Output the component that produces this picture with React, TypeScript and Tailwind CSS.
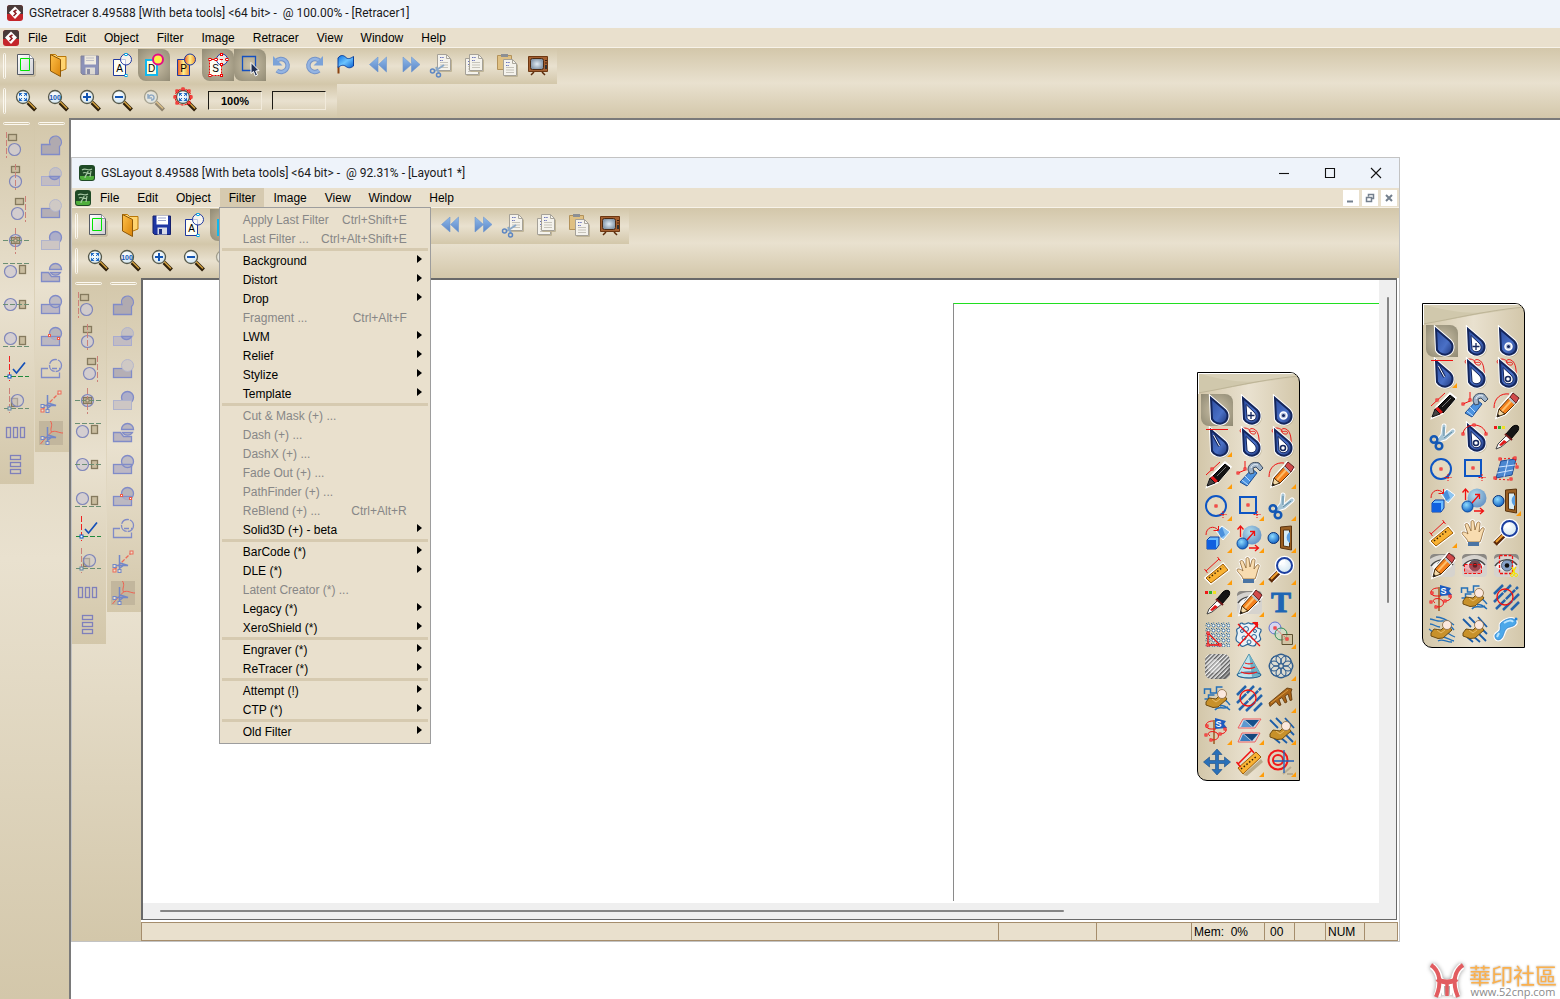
import { useState } from 'react';
import type { ReactNode } from 'react';
import clsx from 'clsx';

const NAVY = '#14265c';

function Icon({ children, className = 'size-8' }: { children: ReactNode; className?: string }) {
  return (
    <svg viewBox="0 0 32 32" className={clsx('block shrink-0', className)} fill="none" aria-hidden="true">
      {children}
    </svg>
  );
}

// Gradients shared by all icons on the page
function IconDefs() {
  return (
    <svg className="absolute size-0" aria-hidden="true">
      <defs>
        <linearGradient id="drop" x1="0" y1="0" x2="1" y2="1">
          <stop offset="0" stopColor="#2c4da0" />
          <stop offset="0.6" stopColor="#4a70c6" />
          <stop offset="1" stopColor="#1d3478" />
        </linearGradient>
        <linearGradient id="folder" x1="0" y1="0" x2="1" y2="1">
          <stop offset="0" stopColor="#ffc14a" />
          <stop offset="1" stopColor="#d98309" />
        </linearGradient>
        <linearGradient id="page" x1="0" y1="0" x2="1" y2="1">
          <stop offset="0" stopColor="#ffffff" />
          <stop offset="1" stopColor="#cfcfd4" />
        </linearGradient>
        <linearGradient id="fire" x1="0" y1="0" x2="1" y2="0">
          <stop offset="0" stopColor="#ee5a20" />
          <stop offset="0.5" stopColor="#fff08a" />
          <stop offset="1" stopColor="#f08a30" />
        </linearGradient>
        <linearGradient id="arrow" x1="0" y1="0" x2="0" y2="1">
          <stop offset="0" stopColor="#8fb9ea" />
          <stop offset="1" stopColor="#5b86c6" />
        </linearGradient>
        <linearGradient id="flag" x1="0" y1="0" x2="1" y2="1">
          <stop offset="0" stopColor="#0a6fe0" />
          <stop offset="0.5" stopColor="#6cc4ff" />
          <stop offset="1" stopColor="#0a5fd0" />
        </linearGradient>
        <radialGradient id="sphere" cx="0.4" cy="0.35" r="0.7">
          <stop offset="0" stopColor="#8fdcff" />
          <stop offset="1" stopColor="#0c5cc0" />
        </radialGradient>
        <radialGradient id="lens" cx="0.4" cy="0.35" r="0.7">
          <stop offset="0" stopColor="#ffffff" />
          <stop offset="1" stopColor="#cfe4f0" />
        </radialGradient>
        <radialGradient id="screen">
          <stop offset="0" stopColor="#e2ecf5" />
          <stop offset="1" stopColor="#8598ab" />
        </radialGradient>
        <pattern id="dots" width="5" height="5" patternUnits="userSpaceOnUse">
          <circle cx="2.5" cy="2.5" r="1.5" stroke="#2a6496" strokeWidth="0.9" fill="#fff" />
          <path d="M0 0h1v1H0z" fill="#2a6496" />
        </pattern>
        <pattern id="hatch" width="3" height="3" patternUnits="userSpaceOnUse" patternTransform="rotate(45)">
          <rect width="3" height="3" fill="#f2f2f2" />
          <rect width="1.5" height="3" fill="#5c5c5c" />
        </pattern>
      </defs>
    </svg>
  );
}

/* ---------- standard toolbar ---------- */

const Node = ({ x, y, c = '#f00000' }: { x: number; y: number; c?: string }) => (
  <rect x={x - 1} y={y - 1} width="2" height="2" fill="#fff" stroke={c} strokeWidth="1" />
);

const Letter = ({ children }: { children: string }) => (
  <text x="13.5" y="23" textAnchor="middle" fontSize="10" fill="#000" fontFamily="Liberation Sans, sans-serif">
    {children}
  </text>
);

const PageSheet = ({ x, y }: { x: number; y: number }) => (
  <g transform={`translate(${x} ${y})`}>
    <path d="M1.5 17.5h13v-12" stroke="#bfb496" />
    <path d="M0.5 .5h9l4 4v12h-13z" fill="#f4f2ec" stroke="#a5a198" />
    <path d="M9.5 .5v4h4" stroke="#aaa69c" />
    <path d="M3 3.5h4M3 6.5h3" stroke="#6b74bb" strokeDasharray="1.5 .7" />
    <path d="M3 8.5h8M3 11h8M3 13.5h8" stroke="#c6c3ba" />
  </g>
);

const toolbarIcons: Record<string, ReactNode> = {
  new: (
    <>
      <path d="M9 27h16V12" stroke="#b8ab8d" />
      <path d="M7.5 5.5h12l4 4v16h-16z" fill="url(#page)" stroke="#555b66" />
      <path d="M19.5 5.5v4h4" fill="#fff" stroke="#8b8f98" />
      <path d="M10.5 9.5h9v12h-9z" stroke="#00e400" />
    </>
  ),
  open: (
    <>
      <path d="M8.5 5.5h5l2 2h8.5v12.5l-5 2z" fill="#ffd470" stroke="#b97708" />
      <path d="M8.5 5.5l10 5v17l-10-5.5z" fill="url(#folder)" stroke="#8c5708" />
    </>
  ),
  save: (
    <>
      <path d="M7 7h17.5v18.5h-16l-1.5-1.5z" fill="#1e36a4" stroke="#15206c" />
      <path d="M10.5 6.5h11.5v9h-11.5z" fill="#fff" />
      <path d="M12 9h8M12 11.5h8" stroke="#9aa3cc" />
      <path d="M11.5 18.5h9.5v7h-9.5z" fill="#d8dbe8" />
      <path d="M13 20h3v5h-3z" fill="#1e2f80" />
    </>
  ),
  fontA: (
    <>
      <path d="M7.5 10.5h12v16h-12z" fill="#fffef2" stroke="#2039a0" />
      <circle cx="20" cy="10.5" r="5.5" stroke="#2039a0" fill="#fff" fillOpacity=".7" />
      <Letter>A</Letter>
      <Node x={20} y={5.5} c="#00a8e8" />
      <Node x={20} y={26.5} c="#00a8e8" />
    </>
  ),
  fontD: (
    <>
      <path d="M8 11h11v15H8z" fill="#fffde0" stroke="#10b8ee" strokeWidth="2" />
      <circle cx="20" cy="10.5" r="5" stroke="#e40d86" strokeWidth="2" fill="#fff04a" />
      <Letter>D</Letter>
    </>
  ),
  fontP: (
    <>
      <path d="M7.5 10.5h12v16h-12z" fill="url(#fire)" stroke="#2039a0" />
      <circle cx="20" cy="10.5" r="5.5" stroke="#2039a0" fill="url(#fire)" />
      <Letter>P</Letter>
    </>
  ),
  fontS: (
    <>
      <path d="M7.5 10.5h12v16h-12z" fill="#fffef2" stroke="#f00000" strokeDasharray="2 1" />
      <circle cx="20" cy="10.5" r="5.5" stroke="#2039a0" fill="#fff" fillOpacity=".7" />
      <path d="M8 10.5h17" stroke="#f00000" strokeDasharray="3 2" />
      <Letter>S</Letter>
      <Node x={8} y={10.5} />
      <Node x={8} y={26.5} />
      <Node x={19.5} y={26.5} />
      <Node x={19.5} y={5.5} />
      <Node x={25} y={10.5} />
      <Node x={14} y={10.5} />
      <Node x={19.5} y={15.5} />
    </>
  ),
  select: (
    <>
      <path d="M8.5 7.5h13v14h-13z" stroke="#1450c0" strokeWidth="1.3" />
      <path d="M17 13.5v11l2.5-2 1.8 4.500 2.2-1-1.8-4 3.3-.5z" fill="#223052" stroke="#fff" />
    </>
  ),
  undo: (
    <>
      <path d="M10 12.5a6.500 6.500 0 1 1 1 9" stroke="#7594c8" strokeWidth="4.500" />
      <path d="M10 12.5a6.500 6.500 0 1 1 1 9" stroke="#94b4e2" strokeWidth="2.500" />
      <path d="M7 7v9.5h9.5z" fill="#7ba2d8" />
    </>
  ),
  redo: (
    <>
      <path d="M22 12.5a6.500 6.500 0 1 0-1 9" stroke="#7594c8" strokeWidth="4.500" />
      <path d="M22 12.5a6.500 6.500 0 1 0-1 9" stroke="#94b4e2" strokeWidth="2.500" />
      <path d="M25 7v9.5h-9.5z" fill="#7ba2d8" />
    </>
  ),
  flag: (
    <>
      <path d="M8.5 17.5v7" stroke="#8a4210" strokeWidth="2" />
      <path d="M8 9c3-4 6-2.500 8-.5s4.500 1 7.500-1v9.500c-3 2.500-5.500 2-7.500.5s-4.500-2-8 1z" fill="url(#flag)" stroke="#0b3f9c" />
    </>
  ),
  rewind: <path d="M16 8v15l-8.500-7.500zM24.500 8v15l-8-7.500z" fill="url(#arrow)" stroke="#6f97cf" strokeWidth=".6" />,
  forward: <path d="M9 8v15l8.500-7.500zM17.500 8v15l8.500-7.500z" fill="url(#arrow)" stroke="#6f97cf" strokeWidth=".6" />,
  cut: (
    <>
      <PageSheet x={11} y={5} />
      <path d="M18 16l-9 6M10 18l3 6" stroke="#8aa8c8" strokeWidth="2" />
      <circle cx="6.5" cy="22" r="2" stroke="#5d86c2" strokeWidth="1.500" />
      <circle cx="12.5" cy="26" r="2" stroke="#5d86c2" strokeWidth="1.500" />
    </>
  ),
  copy: (
    <>
      <PageSheet x={7} y={9} />
      <PageSheet x={11} y={5} />
    </>
  ),
  paste: (
    <>
      <path d="M7.5 6.5h14v14h-14z" fill="#dfc083" stroke="#b3925a" />
      <path d="M11 5h7v3h-7z" fill="#8c8f94" />
      <PageSheet x={13} y={10} />
    </>
  ),
  tv: (
    <>
      <path d="M12 23l-3 3M20 23l3 3" stroke="#5a2c0c" strokeWidth="1.500" />
      <path d="M6.5 7.5h19v15h-19z" fill="#a35f31" stroke="#6e3812" />
      <rect x="8.500" y="9.500" width="13" height="11" rx="2" fill="url(#screen)" stroke="#4c2a12" />
      <path d="M23 11.5h2M23 14h2" stroke="#3b2010" />
      <path d="M23 16h2v4h-2z" fill="#333" />
    </>
  ),
};

const toolbarButtons = [
  { name: 'new', label: 'New' },
  { name: 'open', label: 'Open' },
  { name: 'save', label: 'Save' },
  { name: 'fontA', label: 'Outline view' },
  { name: 'fontD', label: 'Draft view', on: true },
  { name: 'fontP', label: 'Preview' },
  { name: 'fontS', label: 'Structure view', on: true },
  { name: 'select', label: 'Select', on: true },
  { name: 'undo', label: 'Undo' },
  { name: 'redo', label: 'Redo' },
  { name: 'flag', label: 'Flag' },
  { name: 'rewind', label: 'Previous' },
  { name: 'forward', label: 'Next' },
  { name: 'cut', label: 'Cut' },
  { name: 'copy', label: 'Copy' },
  { name: 'paste', label: 'Paste' },
  { name: 'tv', label: 'Monitor' },
];

const zoomKinds = ['fit', '100', 'in', 'out', 'back', 'area'];

function ZoomIcon({ kind }: { kind: string }) {
  return (
    <Icon>
      <g opacity={kind === 'back' ? 0.45 : 1}>
        <path d="M18 18.5l7.500 7.500" stroke="#2e1f0a" strokeWidth="4" />
        <path d="M18 17.500l7 7" stroke="#d0a040" strokeWidth="1.500" />
        <circle cx="13" cy="13" r="6.500" fill="url(#lens)" stroke="#55584a" strokeWidth="1.300" />
        {(kind === 'fit' || kind === 'area') && (
          <>
            <path d="M9 9l3.500 0-3.500 3.500zM17 9l-3.500 0 3.500 3.500zM9 17l3.500 0-3.500-3.500zM17 17l-3.500 0 3.500-3.500z" fill="#1e68c4" />
            <path d="M10 10l2 2M16 10l-2 2M10 16l2-2M16 16l-2-2" stroke="#1e68c4" />
          </>
        )}
        {kind === '100' && (
          <text x="13" y="15.500" textAnchor="middle" fontSize="7" fontWeight="bold" fill="#1255b4" fontFamily="Liberation Sans, sans-serif">
            100
          </text>
        )}
        {kind === 'in' && <path d="M9 13h8M13 9v8" stroke="#1255b4" strokeWidth="2" />}
        {kind === 'out' && <path d="M9 13h8" stroke="#1255b4" strokeWidth="2" />}
        {kind === 'back' && <path d="M10 10v4h4M10.5 13.500c1-3.500 6-3 5.500.5-.3 1.500-1.500 2-3 2" stroke="#2a6ec0" strokeWidth="1.500" />}
      </g>
      {kind === 'area' && (
        <>
          <circle cx="13" cy="13" r="8" stroke="#f00000" strokeDasharray="3 1" />
          <Node x={13} y={5} />
          <Node x={7} y={7} />
          <Node x={19} y={7} />
          <Node x={5} y={13} />
          <Node x={21} y={13} />
          <Node x={7} y={19} />
          <Node x={19} y={19} />
        </>
      )}
    </Icon>
  );
}

/* ---------- side columns ---------- */

const box = { stroke: '#857a5e', strokeWidth: 1.3, fill: '#c9bd9f' };
const disc = { stroke: '#7f86ba', strokeWidth: 1.2, fill: '#cfcbd2', fillOpacity: 0.8 };
const redDash = { stroke: '#cc8078', strokeDasharray: '6 2' };
const greenDash = { stroke: '#6b8f73', strokeDasharray: '5 2' };
const bar = { stroke: '#7f80bb', strokeWidth: 1.3, fill: '#d5ccb8' };

const alignIcons: ReactNode[] = [
  <>
    <path d="M6.5 3v26" {...redDash} />
    <rect x="8.5" y="5.5" width="8" height="6" {...box} />
    <circle cx="14.5" cy="20.5" r="6" {...disc} />
  </>,
  <>
    <rect x="11.5" y="5.5" width="8" height="6" {...box} />
    <circle cx="15.5" cy="20.5" r="6" {...disc} />
    <path d="M15.5 3v26" {...redDash} />
  </>,
  <>
    <path d="M25.5 3v26" {...redDash} />
    <rect x="15.5" y="5.5" width="8" height="6" {...box} />
    <circle cx="17.5" cy="20.5" r="6" {...disc} />
  </>,
  <>
    <circle cx="15.5" cy="15.5" r="6" {...disc} />
    <rect x="11.5" y="12.5" width="8" height="6" {...box} />
    <path d="M15.5 3v26" {...redDash} />
    <path d="M3 15.5h26" {...greenDash} />
    <rect x="14" y="14" width="3" height="3" fill="#d9cdb4" stroke="#857a5e" />
  </>,
  <>
    <path d="M3 6.5h26" {...greenDash} />
    <circle cx="10.5" cy="14.5" r="6" {...disc} />
    <rect x="19.5" y="8.5" width="6" height="8" {...box} />
  </>,
  <>
    <circle cx="10.5" cy="15.5" r="6" {...disc} />
    <rect x="19.5" y="11.5" width="6" height="8" {...box} />
    <path d="M3 15.5h26" {...greenDash} />
  </>,
  <>
    <circle cx="10.5" cy="17.5" r="6" {...disc} />
    <rect x="19.5" y="15.5" width="6" height="8" {...box} />
    <path d="M3 25.5h26" {...greenDash} />
  </>,
  <>
    <path d="M9.5 3v25" stroke="#f02020" strokeDasharray="6 2" />
    <path d="M4 23.5h25" stroke="#1f8a3c" strokeDasharray="5 2" />
    <rect x="8" y="22" width="3" height="3" fill="#fff" stroke="#0a58c8" />
    <path d="M13 16l3.5 4L25 9.5" stroke="#1450b8" strokeWidth="1.700" />
  </>,
  <>
    <path d="M9.5 3v25" {...redDash} />
    <path d="M4 23.5h25" {...greenDash} />
    <rect x="11.5" y="13.5" width="6" height="8" {...box} />
    <circle cx="17.5" cy="15.5" r="6" {...disc} fillOpacity={0.5} />
    <rect x="8" y="22" width="3" height="3" fill="#e9e0cd" stroke="#5f86a8" />
  </>,
  <>
    <rect x="6.5" y="10.5" width="4" height="10" {...bar} />
    <rect x="13.5" y="10.5" width="4" height="10" {...bar} />
    <rect x="20.5" y="10.5" width="4" height="10" {...bar} />
  </>,
  <>
    <rect x="10.5" y="6.5" width="10" height="4" {...bar} />
    <rect x="10.5" y="13.5" width="10" height="4" {...bar} />
    <rect x="10.5" y="20.5" width="10" height="4" {...bar} />
  </>,
];

const line = { stroke: '#808bc8', strokeWidth: 1.3 };

const SnipBlades = () => (
  <>
    <path d="M12.5 10v16M8 20.5h13l-8-2.500M13 23l4-3" stroke="#7287c8" strokeWidth="1.500" />
    <rect x="6" y="19.5" width="3" height="3" fill="#e9e0cd" stroke="#7287c8" />
    <rect x="11" y="24.5" width="3" height="3" fill="#e9e0cd" stroke="#7287c8" />
  </>
);

const shapeIcons: ReactNode[] = [
  <path d="M6.5 15.5h8.500a6 6 0 1 1 9.500 2v8h-18z" fill="#b0aab0" {...line} />,
  <>
    <circle cx="20.5" cy="12.5" r="6" fill="#c6c1c2" stroke="#b0b3cc" />
    <rect x="6.5" y="15.5" width="18" height="9" fill="#c2bcc2" stroke="#a9acd0" />
    <path d="M14.5 15.5h10c-2 4-8 4-10 0z" fill="#a5a7c8" {...line} />
  </>,
  <>
    <rect x="6.5" y="15.5" width="18" height="9" fill="#b5afb5" {...line} />
    <circle cx="20.5" cy="12.5" r="6" fill="#cfc9c5" stroke="#b5b7cc" />
  </>,
  <>
    <circle cx="20.5" cy="12.5" r="6" fill="#adaec8" {...line} />
    <rect x="6.5" y="15.5" width="18" height="9" fill="#cdc6c4" stroke="#b0b3cc" />
  </>,
  <>
    <path d="M14.5 12.5a6 6 0 0 1 12 0z" fill="#bab6bf" {...line} />
    <path d="M6.5 15.5h7l3 4h8v5h-18z" fill="#bcb6bf" {...line} />
    <path d="M15.5 15.5h10c-2 3.500-8 3.500-10 0z" fill="#bab6bf" {...line} />
  </>,
  <>
    <rect x="6.5" y="15.5" width="18" height="9" fill="#bdb8c4" {...line} />
    <circle cx="20.5" cy="12.5" r="6" fill="#bfbcc4" {...line} />
    <path d="M15.5 15.5h9v3" {...line} />
  </>,
  <>
    <circle cx="20.5" cy="12.5" r="6" fill="#b7b4bb" {...line} />
    <rect x="6.5" y="15.5" width="18" height="9" fill="#b3b0c0" fillOpacity=".8" {...line} />
    <rect x="13.5" y="13.5" width="2" height="2" fill="#fff" stroke="#f05a48" />
    <rect x="22.5" y="16.5" width="2" height="2" fill="#fff" stroke="#f05a48" />
  </>,
  <>
    <path d="M13 15.5h-6.500v9h18v-5" {...line} />
    <circle cx="20.5" cy="12.5" r="6" {...line} strokeDasharray="9 1" />
    <path d="M17 15.5h8" {...line} strokeDasharray="5 2" />
  </>,
  <>
    <path d="M7 25L25 7" stroke="#ec6a58" strokeWidth="1.300" strokeDasharray="4 1.500" />
    <rect x="23" y="6" width="3" height="3" fill="#e9dfcc" stroke="#ec6a58" />
    <rect x="6" y="24" width="3" height="3" fill="#e9dfcc" stroke="#ec6a58" />
    <SnipBlades />
  </>,
  <>
    <rect x="4" y="4" width="24" height="24" fill="#c2b69d" />
    <path d="M15.5 4c3 5-1 7 1 11-3 3-7 7-11 12M16.5 15c4-2 7 1 11.500 1" stroke="#f06050" />
    <SnipBlades />
  </>,
];

/* ---------- tool palette ---------- */

const DROP = 'M10 4L24 16C28 20 27 26 23 28.500S13 29 11 25Q10.5 14 10 4z';
const DROP_IN = 'M13 10.5l8 7.500c3 3 2.500 6.500 0 8s-6 .5-7-2z';

const Drop = ({ hollow = false, children }: { hollow?: boolean; children?: ReactNode }) => (
  <>
    <path d={DROP} stroke="#a89c7c" strokeWidth="3" strokeOpacity=".5" transform="translate(1 1)" />
    <path d={DROP} stroke="#fff" strokeWidth="4" />
    <path d={DROP} fill="url(#drop)" stroke={NAVY} strokeWidth="2" />
    {hollow && <path d={DROP_IN} fill="#fff" stroke={NAVY} />}
    {children}
  </>
);

const RedCurls = () => (
  <path d="M14 8c-6 1-9-4-5-5.500s8 1 8 2.500 5-1 5.500 1.500-5 2-6-1 3-4 6-1.500 4 9 3.500 14" stroke="#e81818" />
);

const Finger = () => (
  <>
    <path d="M5 20l3-4 7 1 6-6 5 6-9 8-5 .5-7-2.500z" fill="#c8912a" stroke="#6e4c12" />
    <path d="M11 17l4 3 4-3" stroke="#e8bc68" />
    <circle cx="21" cy="12" r="4.500" fill="#fbe8de" stroke="#8a6840" strokeWidth=".8" />
  </>
);

const Bevel = () => (
  <path d="M4 13L13 4M4 21L21 4M6 28L28 6M13 29L29 13M21 29L29 21" stroke="#2464ac" strokeWidth="2.500" strokeDasharray="13 1" />
);

const Ruler = () => (
  <>
    <path d="M5 24L22 10l5 6L10 29z" fill="#fff" stroke="#fff" strokeWidth="3" />
    <path d="M5 24L22 10l5 6L10 29z" fill="#f9b233" stroke="#9a5c08" />
    <path d="M8 24L22 13" stroke="#3a2406" strokeWidth="1.500" strokeDasharray="1.500 2" />
    <path d="M5 17L18 5M3.5 15l3 4M16.5 3l3 4" stroke="#e81818" />
  </>
);

const Pencil = () => (
  <>
    <path d="M7 28l2-8L22 5l6 6-13 14z" stroke="#fff" strokeWidth="3" />
    <path d="M7 28l2-8 6 5z" fill="#f3d9a8" stroke="#3a2406" />
    <path d="M7 28l1-3 2 2z" fill="#222" />
    <path d="M9 20L20 8l6 6-11 11z" fill="#f4801c" stroke="#5c3208" />
    <path d="M12 22L22 11" stroke="#ffbe68" strokeWidth="2" />
    <path d="M20 8l3-4 6 5-3 5z" fill="#d24a4a" stroke="#5c2020" />
    <path d="M19 9l6 6" stroke="#b8c4d0" strokeWidth="2" />
  </>
);

const Eye = ({ tint = '#86a2c8' }: { tint?: string }) => (
  <>
    <rect x="4" y="5" width="25" height="23" rx="4" fill="#d6d3ce" />
    <path d="M4 10c0-4 2-5 5-5h16c3 0 4 2 4 6-7-6-16-7-25-1z" fill="#8b8883" />
    <path d="M5 17c5-7 15-9 22-1-6 7-16 8-22 1z" fill="#f2f2f2" />
    <path d="M5 17c5-7 15-9 22-1" stroke="#444" strokeWidth="1.500" />
    <circle cx="17" cy="16.500" r="5.500" fill={tint} stroke="#55606e" />
    <circle cx="17" cy="16.500" r="2.300" fill="#111" />
  </>
);

const RulerPoint = ({ x, y }: { x: number; y: number }) => <rect x={x} y={y} width="2" height="2" stroke="#f01010" fill="#fff" />;

const toolIcons: Record<string, ReactNode> = {
  drop: <Drop />,
  dropPlus: (
    <Drop hollow>
      <path d="M18 18v7M14.5 21.500h7" stroke={NAVY} strokeWidth="1.300" />
    </Drop>
  ),
  dropRing: (
    <Drop>
      <circle cx="18.5" cy="21.500" r="3.500" fill="#b9c4e0" stroke="#fff" strokeWidth="1.500" />
      <circle cx="18.5" cy="21.500" r="1.500" fill={NAVY} />
    </Drop>
  ),
  tangent: (
    <>
      <Drop>
        <path d="M12.5 9l6 11" stroke={NAVY} strokeWidth="3" />
        <path d="M12.5 9l6 11" stroke="#fff" />
      </Drop>
      <path d="M5 3.5h22" stroke="#f01010" />
    </>
  ),
  curves: (
    <>
      <RedCurls />
      <Drop hollow />
    </>
  ),
  curvesRing: (
    <>
      <RedCurls />
      <Drop hollow>
        <circle cx="18" cy="22" r="2.500" fill="#fff" stroke={NAVY} strokeWidth="1.500" />
      </Drop>
    </>
  ),
  dropArc: (
    <>
      <Drop hollow>
        <circle cx="18" cy="22" r="2.500" fill="#fff" stroke={NAVY} strokeWidth="1.500" />
      </Drop>
      <path d="M5 13C6 1 26 1 28 13" stroke="#f01010" />
      <RulerPoint x={4} y={12} />
      <RulerPoint x={15} y={3} />
      <RulerPoint x={27} y={12} />
    </>
  ),
  marker: (
    <>
      <path d="M5 17L19 4" stroke="#f01010" />
      <RulerPoint x={10} y={10} />
      <path d="M7 28l4-10L24 5l5 4-13 15z" fill="#fff" stroke="#fff" strokeWidth="3" />
      <path d="M12 18L24 6l5 4-12 14z" fill="#141414" stroke="#000" />
      <path d="M16 18l9-9" stroke="#777" />
      <path d="M9 20l3-2 5 5-3 2z" fill="#e01818" stroke="#5c0808" strokeWidth=".6" />
      <path d="M6 28l3-8 5 5z" fill="#444" stroke="#111" />
    </>
  ),
  wrench: (
    <>
      <path d="M5 15l7-3V3" stroke="#f01010" />
      <RulerPoint x={4} y={14} />
      <RulerPoint x={11} y={10} />
      <path d="M7 24L19 11l5 4-10 13z" fill="#4c93e0" stroke="#1d4c90" />
      <path d="M9 22l6 5M12 18l5 5" stroke="#b8dcff" />
      <path d="M15 12c0-6 5-9 11-7l4 5-3 3-4-4-3 1 1 5-4 1z" fill="#9fb3c8" stroke="#3c4c60" />
      <path d="M18 10c1-3 3-4 7-3" stroke="#eef4fa" />
    </>
  ),
  pencil: (
    <>
      <path d="M4 19c0-10 7-15 15-14" stroke="#f01010" />
      <Pencil />
    </>
  ),
  circle: (
    <>
      <circle cx="15" cy="16" r="10" stroke="#0d55c4" strokeWidth="2" fill="#e4dac0" />
      <RulerPoint x={14} y={15} />
      <path d="M22 21v7M18.5 24.500h7" stroke="#f01010" strokeDasharray="2 1" />
    </>
  ),
  square: (
    <>
      <rect x="7" y="7" width="16" height="16" stroke="#0d55c4" strokeWidth="2" fill="#e4dac0" />
      <RulerPoint x={14} y={14} />
      <path d="M24 21v7M20.5 24.500h7" stroke="#f01010" strokeDasharray="2 1" />
    </>
  ),
  scissors: (
    <>
      <path d="M18 5l-1 9-5 6M27 10l-8 7-7 2" stroke="#fff" strokeWidth="5" strokeLinecap="round" />
      <path d="M18 5l-1 9-5 6M27 10l-8 7-7 2" stroke="#a6c4d4" strokeWidth="3" strokeLinecap="round" />
      <path d="M18 6l0 9M26 11l-8 6" stroke="#5c8aa4" />
      <circle cx="8" cy="18.500" r="3.300" stroke="#1458b4" strokeWidth="2.500" />
      <circle cx="13" cy="25" r="3.300" stroke="#1458b4" strokeWidth="2.500" />
    </>
  ),
  cubes: (
    <>
      <path d="M15 9l6-5 8 6-7 8z" fill="#8cc4f0" stroke="#fff" />
      <path d="M17 9l4-4 3 8-4 3z" fill="#4a90dc" />
      <path d="M5 13c0-8 8-10 12-5M17.500 4v4.500h-5" stroke="#e81818" />
      <path d="M6 18l3-3h9v8l-3 4H6z" fill="#6cbcff" stroke="#0b3ca0" />
      <path d="M6 18h9v9H6z" fill="#1060e0" />
    </>
  ),
  spheres: (
    <>
      <circle cx="19" cy="13" r="9.500" fill="url(#sphere)" opacity=".6" />
      <circle cx="9.500" cy="21.500" r="5.500" fill="url(#sphere)" stroke="#0b4aa0" />
      <path d="M7.5 15V4M4.5 7.500l3-3.500 3 3.500M14 18l7-8M17 9.500h4.500v4.500M16 26h9M22 23l3.500 3-3.500 3" stroke="#f01010" strokeWidth="1.300" />
    </>
  ),
  mirror: (
    <>
      <path d="M15.5 5l11-1v24l-11-2z" fill="#9a6024" stroke="#5a3410" />
      <path d="M18.5 8h6v17l-6-1z" fill="#d8ecf4" stroke="#5a3410" />
      <path d="M25 10a5.500 6 0 0 0 0 11z" fill="#5a9ee0" />
      <circle cx="8.500" cy="16" r="5.500" fill="url(#sphere)" stroke="#0a3478" />
    </>
  ),
  ruler: <Ruler />,
  hand: (
    <>
      <path
        d="M10 25c-1-4-6-7-6-9s4-1 6 1L7 8c0-2 3-2 3.500 0l2.500 6V5c0-2 3-2 3 0l1 8 2-7c1-2 3.500-1 3 1l-1 8 3-4c1-1 3 0 2 2-2 4-2 8-4 12z"
        fill="#f6d8ac"
        stroke="#fff"
        strokeWidth="2.500"
      />
      <path
        d="M10 25c-1-4-6-7-6-9s4-1 6 1L7 8c0-2 3-2 3.500 0l2.500 6V5c0-2 3-2 3 0l1 8 2-7c1-2 3.500-1 3 1l-1 8 3-4c1-1 3 0 2 2-2 4-2 8-4 12z"
        fill="#f8dcb0"
        stroke="#8c6434"
        strokeWidth=".8"
      />
      <path d="M10 25h11v4H10z" fill="#4a74a4" />
    </>
  ),
  magnifier: (
    <>
      <path d="M6 26l9-9" stroke="#fff" strokeWidth="7" />
      <path d="M5 27l10-10" stroke="#5c2a08" strokeWidth="5" />
      <path d="M6 25l8-8" stroke="#f0a030" strokeWidth="2" />
      <circle cx="19.5" cy="11.500" r="8" stroke="#fff" strokeWidth="3.500" />
      <circle cx="19.5" cy="11.500" r="7.500" fill="url(#lens)" stroke="#1c3fa0" strokeWidth="2" />
      <path d="M15 11c0-3 3-4 5-4" stroke="#fff" strokeWidth="2" />
    </>
  ),
  dropper: (
    <>
      <path d="M4 6.500h3" stroke="#f01818" strokeWidth="3" />
      <path d="M8 6.500h3" stroke="#30b030" strokeWidth="3" />
      <path d="M12 6.500h3" stroke="#f0e020" strokeWidth="3" />
      <path d="M6 28l2-5L18 13l4 4-11 9z" fill="#fff" stroke="#444" />
      <path d="M9 24l5-5 3 2-6 4z" fill="#e01818" />
      <path d="M16 13l6-7c2-2 5-2 6-1s1 4-1 6l-6 7z" fill="#151515" stroke="#000" />
      <path d="M15 13l7 6" stroke="#701818" strokeWidth="2" />
    </>
  ),
  eyePencil: (
    <>
      <Eye />
      <Pencil />
    </>
  ),
  eyeRed: (
    <>
      <Eye tint="#7a4a50" />
      <rect x="6.500" y="15.500" width="17" height="9" fill="#f04050" fillOpacity=".35" stroke="#f01010" strokeDasharray="3 1.500" />
    </>
  ),
  eyeCut: (
    <>
      <Eye />
      <rect x="9.500" y="6.500" width="13" height="18" stroke="#f01010" strokeWidth="1.300" strokeDasharray="3 1.500" />
      <path d="M22 18l3 7M26 18l-4 7" stroke="#f4e400" strokeWidth="1.500" />
      <circle cx="22" cy="26" r="1.500" stroke="#f4e400" />
      <circle cx="26" cy="26" r="1.500" stroke="#f4e400" />
    </>
  ),
  text: (
    <text x="16" y="26" textAnchor="middle" fontSize="30" fontWeight="bold" fill="#1e66b4" stroke="#1e66b4" strokeWidth="1" fontFamily="Liberation Serif, serif">
      T
    </text>
  ),
  patternTri: (
    <>
      <rect x="4" y="4" width="25" height="25" fill="url(#dots)" />
      <path d="M7 15v12h12z" stroke="#f01010" strokeWidth="1.300" />
      <RulerPoint x={6} y={14} />
      <RulerPoint x={6} y={26} />
      <RulerPoint x={18} y={26} />
    </>
  ),
  patternCross: (
    <>
      <path
        d="M9 5c3 3 5-1 7 0s3 2 5 0 3 2 3 4 5 1 4 4-3 3-1 6-1 4-3 5 0 4-4 4-4-3-7-1-5 2-6-1-4-1-4-5 2-4 1-7 0-3 2-4-1-5 3-5z"
        fill="#eaf2f6"
        stroke="#2a6496"
        strokeWidth="1.200"
      />
      <g stroke="#2a6496">
        <circle cx="13" cy="11" r="2.500" />
        <circle cx="21" cy="19" r="2.500" />
        <circle cx="11" cy="20" r="2" />
        <circle cx="16" cy="24" r="2" />
        <circle cx="9" cy="13" r="1.500" />
        <circle cx="22" cy="13" r="1.500" />
      </g>
      <path d="M5 6l22 22M5 28L25 6" stroke="#f01010" strokeWidth="1.300" />
      <path d="M19 4h6v6z" fill="#f01010" />
    </>
  ),
  shapes: (
    <>
      <circle cx="10" cy="10" r="6" fill="#d6d6ee" stroke="#6070d0" />
      <circle cx="16" cy="16" r="6" fill="#cfe0c8" fillOpacity=".7" stroke="#2c8c58" />
      <path d="M17 16.500h10.500v10h-10.500z" fill="#cdbf9c" fillOpacity=".7" stroke="#5c5030" />
      <path d="M10 10l12 11" stroke="#f06060" strokeDasharray="2 1" />
      <RulerPoint x={9} y={9} />
      <RulerPoint x={21} y={20} />
    </>
  ),
  stripes: (
    <>
      <rect x="4" y="4" width="25" height="25" rx="6" fill="url(#hatch)" />
      <circle cx="13" cy="16" r="7" fill="#fff" fillOpacity=".35" />
      <path d="M29 12v13l-4 4H10c10 0 17-6 19-17z" fill="#444" fillOpacity=".4" />
    </>
  ),
  cone: (
    <>
      <path d="M16 4L4 25c4 4 20 4 24 0z" fill="#bfe4ee" stroke="#5090a8" />
      <path d="M16 4l3 23c4 0 8-1 9-2z" fill="#6fb2c8" />
      <path d="M12 4" />
      <ellipse cx="16" cy="25" rx="12" ry="3" stroke="#2a6496" />
      <path d="M12 13c2 1 6 1 8 0M10 17c3 2 9 2 12 0M8 22c4 2 12 2 16 0" stroke="#e82020" strokeWidth="1.300" />
    </>
  ),
  rosette: (
    <g stroke="#28588c">
      <circle cx="16" cy="16" r="11.500" fill="#dfe6e8" fillOpacity=".5" />
      <circle cx="16" cy="9" r="5" />
      <circle cx="16" cy="23" r="5" />
      <circle cx="9" cy="16" r="5" />
      <circle cx="23" cy="16" r="5" />
      <circle cx="11" cy="11" r="5" />
      <circle cx="21" cy="11" r="5" />
      <circle cx="11" cy="21" r="5" />
      <circle cx="21" cy="21" r="5" />
    </g>
  ),
  fingerZig: (
    <>
      <path d="M3.5 12V7h6v4h6V5h6M3.5 17h4v-4h6M14 28c3-5 8 0 13-3M19 24c4-2 7 2 10 4M23 18c3 0 4 3 6 5" stroke="#2470b8" strokeWidth="1.500" />
      <Finger />
    </>
  ),
  fingerWave: (
    <>
      <path d="M4 6c6 1 8 3 12 2s8 4 12 9M4 11c4 0 6 3 10 3M10 4c5 0 10 2 18 8M12 28c4-3 8 1 14 1M16 24c4 0 8 3 12 4M20 19c3 2 6 4 9 5M3 16l5 4" stroke="#2470b8" strokeWidth="1.300" />
      <Finger />
    </>
  ),
  fingerStripes: (
    <>
      <path d="M5 6l8 8M11 4l8 8M20 4l9 10M9 24l6 5M15 23l7 6M20 20l8 8M25 17l4 4" stroke="#1a5ca8" strokeWidth="1.800" />
      <Finger />
    </>
  ),
  stripesCircle: (
    <>
      <Bevel />
      <circle cx="15" cy="16" r="8" stroke="#f01010" strokeWidth="1.300" />
    </>
  ),
  comb: (
    <>
      <path
        d="M4 21L22 6l5 1-1 3 1 8-2 .5-2-6.500-3 2 2 6-2 1-3-5.500-3 2 2 5.500-2 .5-3-4-6 5z"
        fill="#a86418"
        stroke="#5c3408"
        strokeWidth=".8"
      />
      <path d="M6 21L23 8" stroke="#d89a40" />
    </>
  ),
  flagS: (
    <>
      <path d="M13 30V6" stroke="#9a5a20" strokeWidth="1.500" />
      <path d="M14 4l11 3-2 3 3 4-12 1z" fill="#1c5cc0" />
      <text x="17.500" y="13" textAnchor="middle" fontSize="9" fontWeight="bold" fill="#fff" fontFamily="Liberation Sans, sans-serif">
        S
      </text>
      <path d="M12 7c-9 0-9 8-2 8h5M9 22c-5-4 3-6 7-3 4 4-1 9-7 6M24 14c3 3-1 6-5 6" stroke="#f01010" />
      <RulerPoint x={5} y={11} />
      <RulerPoint x={23} y={14} />
      <RulerPoint x={4} y={20} />
      <RulerPoint x={9} y={25} />
      <RulerPoint x={18} y={19} />
    </>
  ),
  skew: (
    <>
      <path d="M10 5h18l-6 9H5z" fill="#cfdde6" stroke="#f06060" />
      <path d="M12 6l14 0-6 7z" fill="#14508c" />
      <path d="M11 6L8 13h11z" fill="#5c98d0" />
      <path d="M9 19h18l-5 9H5z" fill="#cfdde6" stroke="#f06060" />
      <path d="M11 20h14l-6 7z" fill="#14467c" />
      <path d="M10 20l-3 7h11z" fill="#3c7cbc" />
    </>
  ),
  grid: (
    <>
      <path d="M11 8l15-2-4 16-16 3z" fill="#4a86d0" stroke="#234c94" />
      <path d="M18 7l-4 17M9 14l16-2M7 20l16-3" stroke="#cfe4ff" />
      <path d="M10 6l15-1 2 9M5 26l15 1" stroke="#f01010" strokeDasharray="2 2" />
      <RulerPoint x={9} y={5} />
      <RulerPoint x={24} y={4} />
      <RulerPoint x={4} y={24} />
      <RulerPoint x={20} y={25} />
      <RulerPoint x={26} y={13} />
    </>
  ),
  foot: (
    <>
      <path
        d="M11 10c4-4 11-6 14-3s0 6-5 7-5 4-7 9-7 5-8 1 4-4 5-7-1-5 1-7z"
        stroke="#fff"
        strokeWidth="3"
      />
      <path d="M11 10c4-4 11-6 14-3s0 6-5 7-5 4-7 9-7 5-8 1 4-4 5-7-1-5 1-7z" fill="#4ca8ea" stroke="#1c70c0" strokeWidth=".6" />
      <path d="M14 10c4-3 8-3 9-1M9 20l-2 4" stroke="#b8e4ff" strokeWidth="2" />
      <circle cx="26" cy="6" r="1.500" fill="#1c80d8" />
    </>
  ),
  move: (
    <path
      d="M16 3l5 5.500h-3.500v6h6V11l6 5-6 5v-3.500h-6v6H21L16 29l-5-5.500h3.500v-6h-6V21l-6-5 6-5v3.500h6v-6H11z"
      fill="#2a70b8"
      stroke="#1a4c84"
      strokeWidth=".6"
    />
  ),
  measure: (
    <>
      <path d="M10 29L28 13l2 3-16 14z" fill="#b8ab8c" />
      <path d="M5 22L23 6l5 5-18 17z" fill="#f9b233" stroke="#9a5c08" />
      <path d="M8 23L24 10" stroke="#3a2406" strokeWidth="1.500" strokeDasharray="1.500 2" />
      <path d="M5 18L19 4M3.5 16l4 5M17 2l4 5" stroke="#f01010" strokeWidth="1.500" />
    </>
  ),
  target: (
    <>
      <path d="M18 28l8-7M22 28h6" stroke="#b8ab90" strokeWidth="2" />
      <circle cx="13" cy="14" r="9.500" stroke="#f01818" strokeWidth="2" />
      <circle cx="13" cy="14" r="5" stroke="#f01818" strokeWidth="2" />
      <path d="M19 4v23M9 15h20" stroke="#2060b8" strokeWidth="1.300" />
    </>
  ),
};

// A trailing "+" marks a tool with a fly-out
const layoutTools = [
  'drop', 'dropPlus', 'dropRing',
  'tangent+', 'curves', 'curvesRing',
  'marker+', 'wrench', 'pencil+',
  'circle+', 'square+', 'scissors+',
  'cubes+', 'spheres+', 'mirror+',
  'ruler+', 'hand+', 'magnifier+',
  'dropper+', 'eyePencil+', 'text+',
  'patternTri', 'patternCross', 'shapes+',
  'stripes', 'cone', 'rosette+',
  'fingerZig', 'stripesCircle', 'comb+',
  'flagS+', 'skew+', 'fingerStripes+',
  'move', 'measure+', 'target+',
];

const retracerTools = [
  'drop', 'dropPlus', 'dropRing',
  'tangent+', 'curves', 'curvesRing',
  'marker', 'wrench', 'pencil',
  'scissors', 'dropArc', 'dropper',
  'circle', 'square', 'grid',
  'cubes', 'spheres', 'mirror+',
  'ruler+', 'hand', 'magnifier',
  'eyePencil', 'eyeRed', 'eyeCut',
  'flagS', 'fingerZig', 'stripesCircle',
  'fingerWave', 'fingerStripes', 'foot',
];

function ToolPalette({ tools, label, className }: { tools: string[]; label: string; className: string }) {
  const [active, setActive] = useState('drop');

  return (
    <div
      role="toolbar"
      aria-label={label}
      className={clsx(
        'absolute w-[103px] overflow-hidden rounded-tr-[10px] rounded-bl-[10px] border border-black bg-linear-to-r from-[#d3c7aa] via-[#e9e1cf] to-[#d3c7aa] pb-0.5',
        className,
      )}
    >
      <svg viewBox="0 0 101 21" className="block h-[21px] w-full" preserveAspectRatio="none" aria-hidden="true">
        <path d="M0 0h101v4C60 8 30 16 0 20z" fill="#d0c8ac" />
        <path d="M0 0h101v3C60 10 40 12 0 0z" fill="#d9d1b8" />
        <path d="M0 20C30 15 60 7 101 3" fill="none" stroke="#bdb497" />
        <path d="M0 .5h101M.5 0v21" stroke="#fff" />
      </svg>
      <div className="grid grid-cols-[32px_32px_32px] pl-[3px]">
        {tools.map((tool) => {
          const name = tool.replace('+', '');
          return (
            <button
              key={tool}
              aria-label={name}
              onClick={() => setActive(name)}
              className={clsx(
                'relative size-8',
                active === name && 'rounded-tr-lg rounded-bl-lg bg-radial from-[#cfc4aa] to-[#8f8973]',
              )}
            >
              <Icon>
                {toolIcons[name]}
                {tool.endsWith('+') && <path d="M31 26v5h-5z" fill="#ff9c08" />}
              </Icon>
            </button>
          );
        })}
      </div>
    </div>
  );
}

/* ---------- filter menu ---------- */

type MenuEntry = { label: string; keys?: string; sub?: boolean } | null;

const filterMenu: MenuEntry[] = [
  { label: 'Apply Last Filter', keys: 'Ctrl+Shift+E' },
  { label: 'Last Filter ...', keys: 'Ctrl+Alt+Shift+E' },
  null,
  { label: 'Background', sub: true },
  { label: 'Distort', sub: true },
  { label: 'Drop', sub: true },
  { label: 'Fragment ...', keys: 'Ctrl+Alt+F' },
  { label: 'LWM', sub: true },
  { label: 'Relief', sub: true },
  { label: 'Stylize', sub: true },
  { label: 'Template', sub: true },
  null,
  { label: 'Cut & Mask (+) ...' },
  { label: 'Dash (+) ...' },
  { label: 'DashX (+) ...' },
  { label: 'Fade Out (+) ...' },
  { label: 'PathFinder (+) ...' },
  { label: 'ReBlend (+) ...', keys: 'Ctrl+Alt+R' },
  { label: 'Solid3D (+) - beta', sub: true },
  null,
  { label: 'BarCode (*)', sub: true },
  { label: 'DLE (*)', sub: true },
  { label: 'Latent Creator (*) ...' },
  { label: 'Legacy (*)', sub: true },
  { label: 'XeroShield (*)', sub: true },
  null,
  { label: 'Engraver (*)', sub: true },
  { label: 'ReTracer (*)', sub: true },
  null,
  { label: 'Attempt (!)', sub: true },
  { label: 'CTP (*)', sub: true },
  null,
  { label: 'Old Filter', sub: true },
];

function FilterMenu() {
  return (
    <ul className="absolute top-[19px] -left-px z-20 w-[212px] border border-[#9d9d9d] bg-[#e9e0cd] p-0.5">
      {filterMenu.map((item, i) =>
        item ? (
          <li key={item.label}>
            <button
              disabled={!item.sub}
              className="flex h-[19px] w-full items-center justify-between pr-1.5 pl-[21px] text-left hover:bg-[#d6caae] disabled:text-[#878787] disabled:hover:bg-transparent"
            >
              <span>{item.label}</span>
              {item.keys && <span className="pr-[15px]">{item.keys}</span>}
              {item.sub && (
                <svg viewBox="0 0 5 8" className="mb-1 h-2 w-[5px]" aria-hidden="true">
                  <path d="M0 0l5 4-5 4z" />
                </svg>
              )}
            </button>
          </li>
        ) : (
          <li key={i} className="h-[3px] bg-[#d6cab0]" />
        ),
      )}
    </ul>
  );
}

/* ---------- application frame ---------- */

function AppLogo({ color, className }: { color: 'red' | 'green'; className: string }) {
  return (
    <svg viewBox="0 0 16 16" className={clsx('shrink-0', className)} aria-hidden="true">
      {color === 'red' ? (
        <>
          <rect width="16" height="16" rx="3" fill="#c4252a" />
          <path d="M0 3a3 3 0 0 1 3-3h10a3 3 0 0 1 3 3v6H0z" fill="#4a3a3a" />
          <path d="M8 1.500l6 6-6 6.500-6-6.500z" fill="#fff" />
          <path d="M9.500 5L7 6.500l2 2L6.500 11" fill="none" stroke="#8c1c20" strokeWidth="1.500" />
        </>
      ) : (
        <>
          <rect width="16" height="16" rx="3" fill="#1f4a26" />
          <path d="M1 11h14v2a2 2 0 0 1-2 2H3a2 2 0 0 1-2-2z" fill="#4fae3c" />
          <path d="M3 5c4-3 6 2 10-1M4 8c3-2 5 2 8 0M6 13c0-4 3-3 3-7M11 12l1-6" fill="none" stroke="#a6c8a4" strokeWidth="1.200" />
        </>
      )}
    </svg>
  );
}

const Grip = () => <div className="mx-[3px] h-[26px] w-[3px] shrink-0 rounded-sm border border-[#fbf8f0]" />;

function Toolbars({ saved, id }: { saved: boolean; id: string }) {
  return (
    <div className="h-[70px] overflow-hidden bg-linear-to-b from-[#d3c7aa] via-[#e9e1cf] to-[#d3c7aa]">
      <div className="flex h-9 w-[557px] items-start bg-linear-to-b from-[#d3c7aa] via-[#e9e1cf] to-[#d3c7aa] pt-px">
        <div className="flex w-2.5 shrink-0 pt-1">
          <Grip />
        </div>
        {toolbarButtons.map((b) => (
          <button
            key={b.name}
            aria-label={b.label}
            aria-pressed={!!b.on}
            disabled={b.name === 'save' && saved}
            className={clsx(
              'size-8 shrink-0 disabled:opacity-45',
              b.on && 'rounded-tr-lg rounded-bl-lg bg-radial from-[#cdc3aa] to-[#918a74]',
            )}
          >
            <Icon>{toolbarIcons[b.name]}</Icon>
          </button>
        ))}
      </div>
      <div className="flex h-[34px] w-[337px] items-start bg-linear-to-b from-[#d3c7aa] via-[#e9e1cf] to-[#d3c7aa]">
        <div className="flex w-2.5 shrink-0 pt-1">
          <Grip />
        </div>
        {zoomKinds.map((k) => (
          <button key={k} aria-label={`Zoom ${k}`} className="size-8 shrink-0">
            <ZoomIcon kind={k} />
          </button>
        ))}
        <div className="flex gap-2.5 pt-[7px] pl-1.5">
          <input
            id={`${id}-zoom`}
            aria-label="Zoom level"
            defaultValue="100%"
            className="h-[19px] w-[54px] border border-[#f1eadb] border-t-[#1c1a14] border-l-[#1c1a14] bg-transparent text-center text-[11px] font-bold"
          />
          <input
            id={`${id}-angle`}
            aria-label="Angle"
            className="h-[19px] w-[54px] border border-[#f1eadb] border-t-[#1c1a14] border-l-[#1c1a14] bg-transparent text-center text-[11px] font-bold"
          />
        </div>
      </div>
    </div>
  );
}

function SideColumn({ icons, label }: { icons: ReactNode[]; label: string }) {
  return (
    <div className="flex w-[35px] flex-col bg-linear-to-b from-[#d3c7aa] via-[#e9e1cf] to-[#d3c7aa] pt-1 pb-[3px]" aria-label={label} role="toolbar">
      <div className="mb-1 ml-[3px] h-[3px] w-[27px] rounded-sm border border-[#fbf8f0]" />
      {icons.map((icon, i) => (
        <button key={i} aria-label={`${label} ${i + 1}`} className="size-8 shrink-0">
          <Icon>{icon}</Icon>
        </button>
      ))}
    </div>
  );
}

interface FrameProps {
  id: string;
  title: string;
  menus: string[];
  openMenu?: string;
  logo: 'red' | 'green';
  saved: boolean;
  windowed?: boolean;
  children: ReactNode;
}

const mdiButtons = [
  { label: 'Minimize document', d: 'M4 11.5h6', w: 2 },
  { label: 'Restore document', d: 'M6.5 6.5v-2h5v4h-2M4.5 7.5h5v4h-5z', w: 1.5 },
  { label: 'Close document', d: 'M5 5l6 6M11 5l-6 6', w: 2 },
];

function AppFrame({ id, title, menus, openMenu, logo, saved, windowed, children }: FrameProps) {
  return (
    <>
      <header>
        <div
          className={clsx(
            'flex items-center justify-between bg-[#eef3fa]',
            windowed ? 'h-[30px] pl-[7px]' : 'h-7 pb-[3px] pl-[7px]',
          )}
        >
          <div className="flex items-center gap-1.5">
            <AppLogo color={logo} className="size-4" />
            <h1 className="font-['Roboto',sans-serif] text-[12px] leading-4 whitespace-pre text-[#1a1a1a]">{title}</h1>
          </div>
          {windowed && (
            <div className="flex">
              {['M-5 0.5h10', 'M-4.5-4.5h9v9h-9z', 'M-5-5L5 5M5-5L-5 5'].map((d, i) => (
                <button key={d} aria-label={['Minimize', 'Maximize', 'Close'][i]} className="flex h-[30px] w-[46px] items-center justify-center">
                  <svg viewBox="-6 -6 12 12" className="size-3" fill="none" stroke="#111" strokeWidth="1.1">
                    <path d={d} />
                  </svg>
                </button>
              ))}
            </div>
          )}
        </div>
        <div className="flex h-5 items-center border-b border-[#f7f2e8] bg-[#e9e0cd] pl-[3px]">
          <AppLogo color={logo} className="size-4" />
          <nav className="flex flex-1">
            {menus.map((m) => (
              <div key={m} className="relative">
                <button className={clsx('block h-[19px] px-[9px] pt-px text-[12px] leading-[18px]', m === openMenu && 'bg-[#d6cab0]')}>{m}</button>
                {m === openMenu && <FilterMenu />}
              </div>
            ))}
          </nav>
          {windowed && (
            <div className="flex gap-[3px] pr-0.5">
              {mdiButtons.map((b) => (
                <button key={b.label} aria-label={b.label} className="size-4 bg-white">
                  <svg viewBox="0 0 16 16" className="size-4" fill="none" stroke="#74808e" strokeWidth={b.w}>
                    <path d={b.d} />
                  </svg>
                </button>
              ))}
            </div>
          )}
        </div>
        <Toolbars saved={saved} id={id} />
      </header>
      <div className="flex flex-1">
        <aside className="flex w-[69px] shrink-0 items-start gap-px overflow-hidden bg-linear-to-b from-[#d3c7aa] via-[#e9e1cf] to-[#d3c7aa]">
          <SideColumn icons={alignIcons} label="Align" />
          <SideColumn icons={shapeIcons} label="Combine" />
        </aside>
        {children}
      </div>
    </>
  );
}

function LayoutWindow() {
  return (
    <section className="absolute top-[37px] right-[160px] bottom-[57px] left-0 flex flex-col border border-[#c3c3c3] bg-white">
      <AppFrame
        id="layout"
        title="GSLayout 8.49588 [With beta tools] <64 bit> -  @ 92.31% - [Layout1 *]"
        menus={['File', 'Edit', 'Object', 'Filter', 'Image', 'View', 'Window', 'Help']}
        openMenu="Filter"
        logo="green"
        saved={false}
        windowed
      >
        <div className="flex min-w-0 flex-1 flex-col">
          <div className="mr-0.5 flex flex-1 flex-col border-2 border-r border-b border-[#696969] bg-[#efefef]">
            <div className="flex flex-1">
              <div className="relative flex-1 overflow-hidden bg-white">
                <div className="absolute top-[23px] right-0 bottom-0.5 left-[810px] border-t border-l border-t-[#20df20] border-l-[#8a8a8a]" />
              </div>
              <div className="w-[17px] pt-[17px] pl-2">
                <div className="h-[306px] w-0.5 rounded-sm bg-[#858585]" />
              </div>
            </div>
            <div className="h-4 pt-[7px] pl-[17px]">
              <div className="h-0.5 w-[904px] rounded-sm bg-[#858585]" />
            </div>
          </div>
          <footer className="mt-0.5 mr-px flex h-[19px] divide-x divide-[#a58d6c] border border-[#a58d6c] bg-[#e9e0cd] text-[12px] leading-[18px]">
            <div className="flex-1" />
            <div className="w-[98px]" />
            <div className="w-[95px]" />
            <div className="w-[73px] pl-0.5 whitespace-pre">Mem:  0%</div>
            <div className="w-[30px] pl-[5px]">00</div>
            <div className="w-[31px]" />
            <div className="w-[39px] pl-0.5">NUM</div>
            <div className="w-8" />
          </footer>
        </div>
      </AppFrame>
    </section>
  );
}

function SiteMark() {
  return (
    <a href="#" className="absolute right-[3px] bottom-0 flex items-center gap-1">
      <svg viewBox="0 0 36 36" className="size-9 drop-shadow-[0_0_2px_#999]" fill="none" aria-hidden="true">
        <g stroke="#fff" strokeWidth="7">
          <path d="M3 3c8 6 10 18 5 30M33 3c-8 6-10 18-5 30M9 16c5 5 13 5 18 0" />
        </g>
        <g stroke="#e25c60" strokeWidth="4">
          <path d="M2 2c9 6 11 18 5 32M34 2c-9 6-11 18-5 32" />
          <path d="M8 16c6 4 14 4 20 0" strokeWidth="5" />
          <path d="M14 21v11M22 21v11" strokeWidth="2" stroke="#fff" />
          <path d="M18 20v13" strokeWidth="3.500" />
        </g>
      </svg>
      <span className="flex flex-col items-center">
        <span className="font-['Noto_Sans_CJK_TC',sans-serif] text-[22px] leading-[22px] text-[#fbb04c] drop-shadow-[0_0_1px_#aaa]">華印社區</span>
        <span className="font-['Open_Sans',sans-serif] text-[11px] leading-[14px] text-[#8a8a8a]">www.52cnp.com</span>
      </span>
    </a>
  );
}

export default function App() {
  return (
    <div className="relative flex min-h-screen flex-col overflow-hidden bg-white font-['Liberation_Sans',Arial,sans-serif] text-[12px] text-black">
      <IconDefs />
      <AppFrame
        id="retracer"
        title="GSRetracer 8.49588 [With beta tools] <64 bit> -  @ 100.00% - [Retracer1]"
        menus={['File', 'Edit', 'Object', 'Filter', 'Image', 'Retracer', 'View', 'Window', 'Help']}
        logo="red"
        saved
      >
        <main className="relative min-h-[860px] flex-1 border-t-2 border-l-2 border-[#7a7a7a] bg-white">
          <LayoutWindow />
          <ToolPalette tools={layoutTools} label="Layout tools" className="top-[252px] right-[260px]" />
          <ToolPalette tools={retracerTools} label="Retracer tools" className="top-[183px] right-[35px]" />
          <SiteMark />
        </main>
      </AppFrame>
    </div>
  );
}
